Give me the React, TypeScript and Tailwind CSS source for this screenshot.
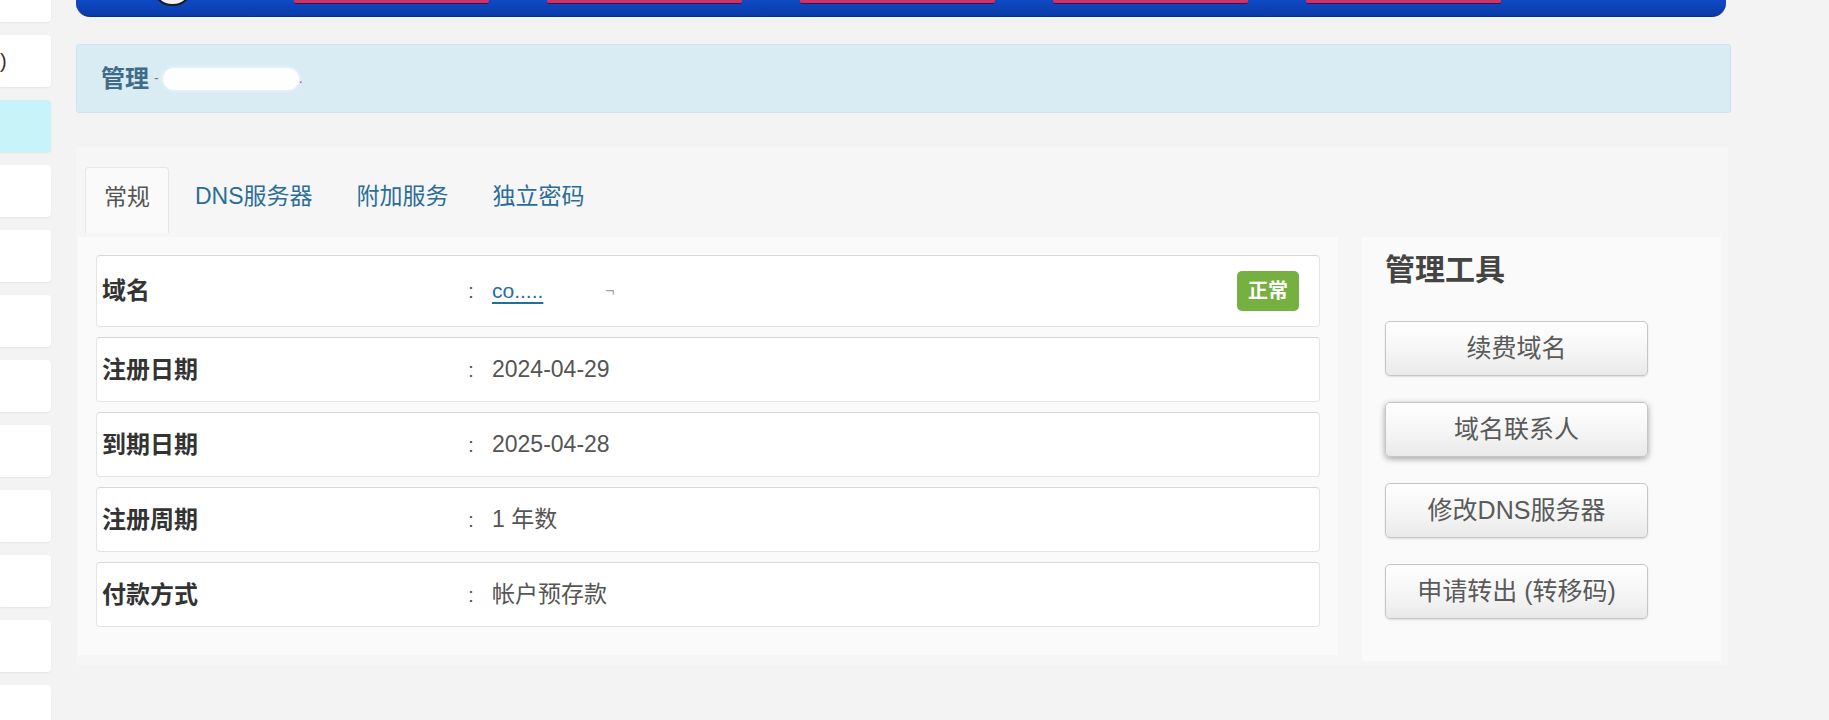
import clsx from "clsx";

const tabs = ["常规", "DNS服务器", "附加服务", "独立密码"];

const rows = [
  { label: "注册日期", value: "2024-04-29" },
  { label: "到期日期", value: "2025-04-28" },
  { label: "注册周期", value: "1 年数" },
  { label: "付款方式", value: "帐户预存款" },
];

const tools = ["续费域名", "域名联系人", "修改DNS服务器", "申请转出 (转移码)"];

function Sidebar() {
  return (
    <div className="-mt-[30px] flex w-[51px] shrink-0 flex-col gap-[13px]">
      {Array.from({ length: 12 }).map((_, i) => (
        <div
          key={i}
          className={clsx(
            "flex h-[52px] shrink-0 items-center overflow-hidden rounded-r-[4px] shadow-[0_1px_2px_rgba(0,0,0,0.06)]",
            i === 2 ? "bg-[#c8f3f9]" : "bg-white"
          )}
        >
          {i === 1 ? (
            <span className="text-[20px] leading-none text-[#333]">)</span>
          ) : null}
        </div>
      ))}
    </div>
  );
}

function Banner() {
  return (
    <div className="mr-[5px] flex h-[17px] items-start overflow-hidden rounded-b-[14px] border-b border-[#07307f] bg-[linear-gradient(180deg,#0e49c4_0%,#0a3ba8_100%)] pl-[76px]">
      <div className="-mt-[34px] h-[40px] w-[41px] shrink-0 rounded-full border-2 border-[#1b1b2a] bg-[#f2f2f2]" />
      <div className="ml-[101px] flex gap-[58px]">
        {Array.from({ length: 5 }).map((_, i) => (
          <div
            key={i}
            className="h-[4px] w-[195px] rounded-b-[2px] border-b border-[#4a0f2c] bg-[#c9346f]"
          />
        ))}
      </div>
    </div>
  );
}

export default function App() {
  return (
    <div className="flex h-[720px] w-full overflow-hidden bg-[#f3f3f3] font-['Liberation_Sans','Noto_Sans_CJK_SC',sans-serif]">
      <Sidebar />

      <main className="ml-[25px] w-[1655px] shrink-0">
        <Banner />

        <div className="mt-[27px] flex h-[69px] items-center rounded-[3px] border border-[#d0e4ee] bg-[#d9ebf3] pl-[24px]">
          <span className="text-[24px] font-bold text-[#3f6c89]">管理</span>
          <span className="ml-[5px] text-[14px] text-[#5d7f96]">-</span>
          <span className="ml-[4px] h-[22px] w-[136px] rounded-full bg-white/95 shadow-[0_0_4px_rgba(255,255,255,0.9)]" />
          <span className="text-[14px] text-[#5d7f96]">.</span>
        </div>

        <section className="mt-[33px] mr-[3px] bg-[#f6f6f6] pb-[4px]">
          <div className="flex gap-[8px] pl-[9px] pt-[21px]">
            {tabs.map((t, i) => (
              <div
                key={t}
                className={clsx(
                  "h-[66px] px-[18px] pt-[14px] text-[23px] leading-[30px]",
                  i === 0
                    ? "rounded-t-[4px] border border-b-0 border-[#e6e6e6] bg-[#fafafa] text-[#555]"
                    : "text-[#2c6d98]"
                )}
              >
                {t}
              </div>
            ))}
          </div>

          <div className="flex items-start pt-[4px]">
            <div className="ml-[2px] flex w-[1260px] flex-col gap-[10px] bg-[#fafafa] px-[18px] pb-[28px] pt-[18px]">
              <div className="flex h-[72px] items-center rounded-[4px] border border-[#e4e4e4] border-t-[#d8d8d8] bg-white pr-[20px]">
                <span className="w-[371px] pl-[5px] text-[24px] font-bold text-[#333]">
                  域名
                </span>
                <span className="w-[24px] text-[21px] text-[#555]">:</span>
                <span className="text-[21px] text-[#1f6f9f] underline underline-offset-4">
                  co.....
                </span>
                <span className="ml-[62px] text-[16px] text-[#9aa7ad]">¬</span>
                <span className="ml-auto flex h-[40px] w-[62px] items-center justify-center rounded-[5px] bg-[#76b041] text-[20px] font-bold text-white">
                  正常
                </span>
              </div>

              {rows.map((r) => (
                <div
                  key={r.label}
                  className="flex h-[65px] items-center rounded-[4px] border border-[#e4e4e4] border-t-[#d8d8d8] bg-white"
                >
                  <span className="w-[371px] pl-[5px] text-[24px] font-bold text-[#333]">
                    {r.label}
                  </span>
                  <span className="w-[24px] text-[21px] text-[#555]">:</span>
                  <span className="text-[23px] text-[#555]">{r.value}</span>
                </div>
              ))}
            </div>

            <div className="ml-[24px] w-[359px] bg-[#fafafa] pb-[42px] pl-[23px] pt-[14px]">
              <h2 className="text-[30px] font-bold leading-[38px] text-[#444]">
                管理工具
              </h2>
              <div className="mt-[32px] flex flex-col gap-[26px]">
                {tools.map((t, i) => (
                  <button
                    key={t}
                    type="button"
                    className={clsx(
                      "h-[55px] w-[263px] rounded-[5px] border border-[#c6c6c6] bg-[linear-gradient(180deg,#ffffff_0%,#f4f4f4_60%,#e9e9e9_100%)] text-[25px] text-[#5a5a5a]",
                      i === 1
                        ? "shadow-[0_2px_6px_rgba(0,0,0,0.35)]"
                        : "shadow-[0_1px_2px_rgba(0,0,0,0.12)]"
                    )}
                  >
                    {t}
                  </button>
                ))}
              </div>
            </div>
          </div>
        </section>
      </main>
    </div>
  );
}
